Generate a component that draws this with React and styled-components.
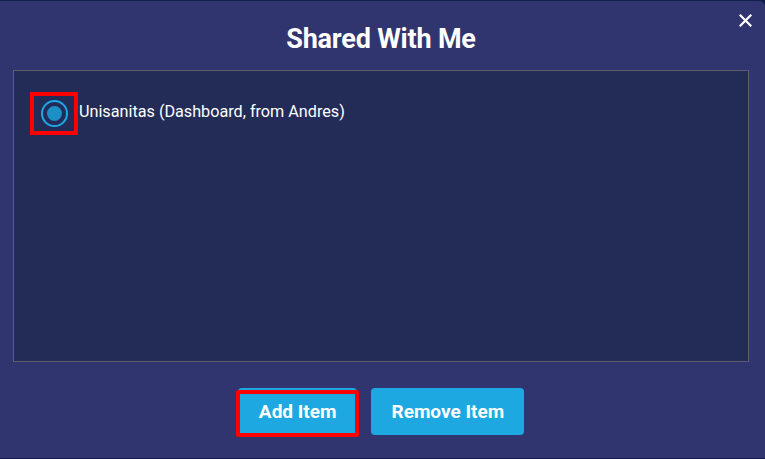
import React from 'react';
import styled, { createGlobalStyle } from 'styled-components';

const GlobalStyle = createGlobalStyle`
  html, body {
    margin: 0;
    padding: 0;
    background-color: #0f1e4a;
    font-family: Roboto, "Liberation Sans", sans-serif;
  }
`;

const Modal = styled.div`
  position: relative;
  box-sizing: border-box;
  margin-top: 1px;
  width: 765px;
  height: 457px;
  padding: 0 16px 0 13px;
  background-color: #31356f;
  border-radius: 0 6px 0 0;
  display: flex;
  flex-direction: column;
`;

const CloseButton = styled.button`
  position: absolute;
  top: 10px;
  right: 11px;
  width: 18px;
  height: 18px;
  padding: 0;
  border: none;
  background: transparent;
  cursor: pointer;
  display: flex;
  align-items: center;
  justify-content: center;
`;

const Title = styled.h1`
  margin: 0;
  height: 69px;
  line-height: 77px;
  font-size: 27px;
  font-weight: 700;
  color: #ffffff;
  text-align: center;
  letter-spacing: -0.2px;
`;

const ListPanel = styled.div`
  box-sizing: border-box;
  height: 292px;
  background-color: #232c57;
  border: 1px solid #5d5f6e;
  padding: 21px 16px;
`;

const ItemRow = styled.label`
  display: flex;
  align-items: center;
  color: #ffffff;
  font-size: 16.2px;
  line-height: 20px;
  cursor: pointer;
`;

const Highlight = styled.span`
  box-sizing: border-box;
  width: 48px;
  height: 43px;
  border: 4px solid #ff0000;
  display: flex;
  align-items: center;
  justify-content: center;
  margin-right: 1px;
`;

const Radio = styled.span`
  box-sizing: border-box;
  width: 27px;
  height: 27px;
  border-radius: 50%;
  border: 2px solid #1ea9e6;
  display: flex;
  align-items: center;
  justify-content: center;

  &::after {
    content: '';
    width: 15px;
    height: 15px;
    border-radius: 50%;
    background-color: #1b8fc6;
  }
`;

const ItemLabel = styled.span`
  margin-top: -3px;
`;

const Actions = styled.div`
  display: flex;
  justify-content: center;
  gap: 14px;
  margin-top: 26px;
`;

const ActionButton = styled.button`
  position: relative;
  height: 47px;
  padding: 0 ${(p) => p.$pad}px;
  border: none;
  border-radius: 4px;
  background-color: #1ea8e1;
  color: #ffffff;
  font-family: Roboto, "Liberation Sans", sans-serif;
  font-size: 19px;
  font-weight: 700;
  cursor: pointer;
`;

const ButtonMark = styled.span`
  position: absolute;
  left: -2px;
  right: -2px;
  top: 2px;
  bottom: -2px;
  border: 4px solid #ff0000;
  border-radius: 2px;
  pointer-events: none;
`;

function SharedWithMe() {
  return (
    <Modal>
      <CloseButton aria-label="Close">
        <svg width="13" height="13" viewBox="0 0 13 13">
          <path d="M1.5 1.5 L11.5 11.5 M11.5 1.5 L1.5 11.5" stroke="#ffffff" strokeWidth="2.2" strokeLinecap="square" />
        </svg>
      </CloseButton>
      <Title>Shared With Me</Title>
      <ListPanel>
        <ItemRow>
          <Highlight>
            <Radio />
          </Highlight>
          <ItemLabel>Unisanitas (Dashboard, from Andres)</ItemLabel>
        </ItemRow>
      </ListPanel>
      <Actions>
        <ActionButton $pad={21}>
          Add Item
          <ButtonMark />
        </ActionButton>
        <ActionButton $pad={20}>Remove Item</ActionButton>
      </Actions>
    </Modal>
  );
}

export default function App() {
  return (
    <>
      <GlobalStyle />
      <SharedWithMe />
    </>
  );
}
